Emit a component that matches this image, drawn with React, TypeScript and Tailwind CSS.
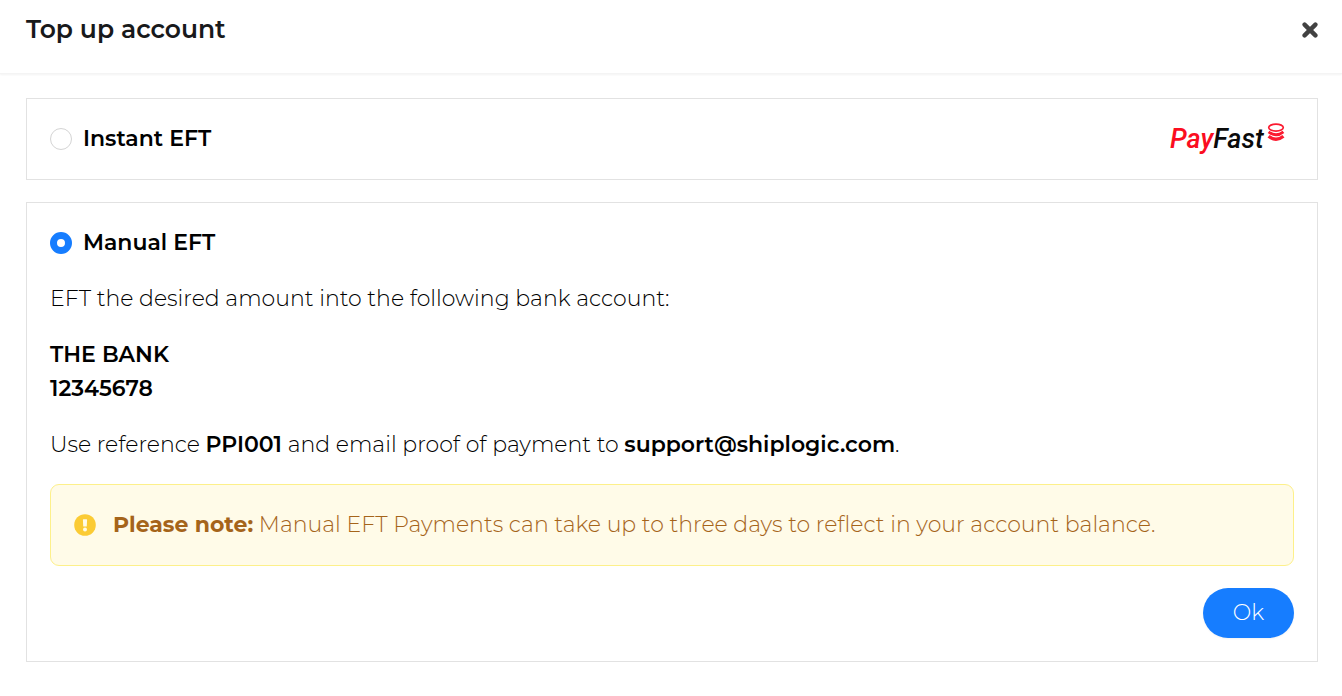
import { useState } from 'react';
import type { ReactNode } from 'react';

type Method = 'instant' | 'manual';

function CloseIcon() {
  return (
    <svg viewBox="0 0 16 16" className="h-4 w-4" fill="none" aria-hidden>
      <path d="M2.6 2.6l10.8 10.8M13.4 2.6L2.6 13.4" stroke="#424242" strokeWidth="4.4" strokeLinecap="round" />
    </svg>
  );
}

function WarningIcon() {
  return (
    <svg viewBox="0 0 22 22" className="h-[22px] w-[22px] shrink-0" aria-hidden>
      <circle cx="11" cy="11" r="10.8" fill="#fbcb34" />
      <path
        d="M9.4 5.2h3.2a.5.5 0 0 1 .5.5l-.3 6.3a.6.6 0 0 1-.6.6H9.8a.6.6 0 0 1-.6-.6l-.3-6.3a.5.5 0 0 1 .5-.5z"
        fill="#fffbe8"
      />
      <circle cx="11" cy="15.4" r="2" fill="#fffbe8" />
    </svg>
  );
}

function PayFastLogo() {
  return (
    <svg viewBox="0 0 116 34" className="h-[34px] w-[116px]" role="img" aria-label="PayFast">
      <text
        x="0"
        y="26"
        fontSize="27"
        fontStyle="italic"
        fontWeight="500"
        className="font-['Roboto','Liberation_Sans',sans-serif]"
      >
        <tspan fill="#fb0d20">Pay</tspan>
        <tspan fill="#0a0a0a">Fast</tspan>
      </text>
      <g fill="none" stroke="#fb1a30">
        <ellipse cx="106" cy="5.6" rx="7.3" ry="3.5" strokeWidth="1.7" />
        <path d="M98.6 9.8q7.4 6 14.8 0" strokeWidth="2.8" />
        <path d="M98.6 14.2q7.4 6 14.8 0" strokeWidth="3.4" />
      </g>
    </svg>
  );
}

interface MethodOptionProps {
  value: Method;
  label: string;
  selected: Method;
  onSelect: (value: Method) => void;
  aside?: ReactNode;
}

function MethodOption({ value, label, selected, onSelect, aside }: MethodOptionProps) {
  return (
    <div className="flex items-center justify-between">
      <label className="flex cursor-pointer items-center gap-[11px] font-semibold">
        <input
          type="radio"
          name="method"
          value={value}
          checked={selected === value}
          onChange={() => onSelect(value)}
          className="h-[22px] w-[22px] shrink-0 appearance-none rounded-full border border-[#d4d4d4] bg-white checked:border-[7px] checked:border-[#167dff]"
        />
        {label}
      </label>
      {aside}
    </div>
  );
}

export default function App() {
  const [method, setMethod] = useState<Method>('manual');

  return (
    <div className="bg-white font-['Montserrat','Inter',sans-serif] text-[22px] leading-[34px] font-[350] text-black">
      <header className="flex items-start justify-between border-b border-[#f4f4f4] pt-3 pr-6 pb-[25px] pl-[26px] shadow-xs">
        <h1 className="text-[25px] font-semibold text-[#18191b]">Top up account</h1>
        <button type="button" aria-label="Close" className="flex h-9 items-center">
          <CloseIcon />
        </button>
      </header>

      <main className="flex flex-col gap-[22px] pt-6 pr-6 pb-8 pl-[26px]">
        <section className="border border-[#e2e2e2] p-[23px]">
          <MethodOption
            value="instant"
            label="Instant EFT"
            selected={method}
            onSelect={setMethod}
            aside={
              <div className="pr-2">
                <PayFastLogo />
              </div>
            }
          />
        </section>

        <section className="flex flex-col gap-[22px] border border-[#e2e2e2] p-[23px]">
          <MethodOption value="manual" label="Manual EFT" selected={method} onSelect={setMethod} />
          <p>EFT the desired amount into the following bank account:</p>
          <p className="font-semibold">
            THE BANK
            <br />
            12345678
          </p>
          <p>
            Use reference <strong className="font-semibold">PPI001</strong> and email proof of
            payment to <strong className="font-semibold">support@shiplogic.com</strong>.
          </p>
          <div
            role="alert"
            className="flex items-center gap-[17px] rounded-[9px] border border-[#fdf08a] bg-[#fffbe8] p-[23px] text-[#a5641a]"
          >
            <WarningIcon />
            <p>
              <strong className="font-bold">Please note:</strong> Manual EFT Payments can take up
              to three days to reflect in your account balance.
            </p>
          </div>
          <div className="flex justify-end">
            <button
              type="button"
              className="rounded-full bg-[#167dff] px-[30px] py-2 text-white shadow-xs"
            >
              Ok
            </button>
          </div>
        </section>
      </main>
    </div>
  );
}
